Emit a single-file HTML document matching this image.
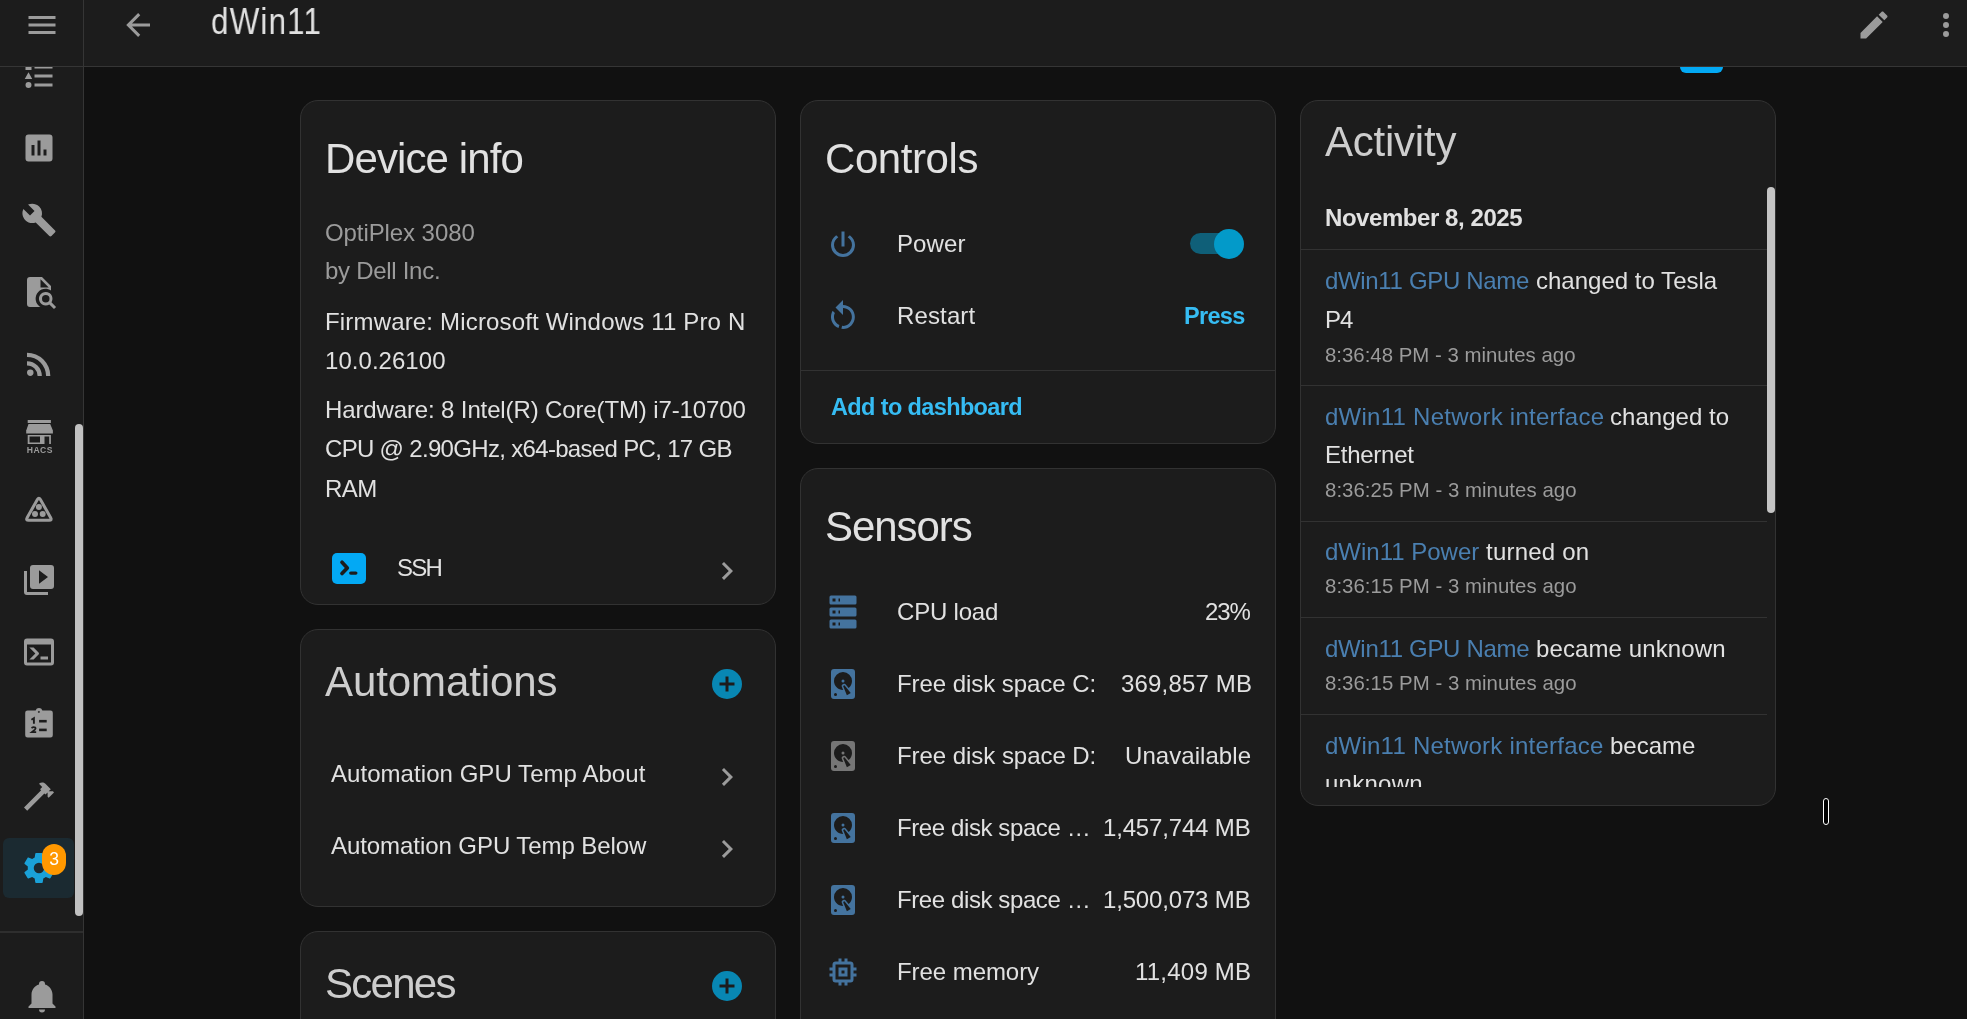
<!DOCTYPE html>
<html><head><meta charset="utf-8"><title>dWin11</title>
<style>
html,body{margin:0;padding:0;width:1967px;height:1019px;overflow:hidden;background:#111111;font-family:'Liberation Sans', sans-serif;}
.t{position:absolute;white-space:nowrap;line-height:1;will-change:transform;}
.i{position:absolute;display:block;will-change:transform;}
.card{position:absolute;background:#1c1c1c;border:1px solid #323232;border-radius:18px;box-sizing:border-box;overflow:hidden;}
.hr{position:absolute;height:1px;background:#323232;}
</style></head><body>

<div class="card" style="left:300px;top:100px;width:476px;height:505px"></div>
<div class="card" style="left:300px;top:629px;width:476px;height:278px"></div>
<div class="card" style="left:300px;top:931px;width:476px;height:200px"></div>
<div class="card" style="left:800px;top:100px;width:476px;height:344px"></div>
<div class="card" style="left:800px;top:468px;width:476px;height:700px"></div>
<div class="card" style="left:1300px;top:100px;width:476px;height:706px"></div>
<div class="t" id="devinfo" style="left:325.00px;top:138px;font-size:42px;color:#e1e1e1;letter-spacing:-0.900px;">Device info</div>
<div class="t" id="optiplex" style="left:325.00px;top:221px;font-size:24px;color:#9b9b9b;letter-spacing:-0.083px;">OptiPlex 3080</div>
<div class="t" id="bydell" style="left:325.00px;top:259px;font-size:24px;color:#9b9b9b;letter-spacing:-0.288px;">by Dell Inc.</div>
<div class="t" id="firmware" style="left:325.00px;top:310px;font-size:24px;color:#e1e1e1;letter-spacing:0.171px;">Firmware: Microsoft Windows 11 Pro N</div>
<div class="t" id="ver" style="left:325.00px;top:349px;font-size:24px;color:#e1e1e1;letter-spacing:0.042px;">10.0.26100</div>
<div class="t" id="hw1" style="left:325.00px;top:398px;font-size:24px;color:#e1e1e1;letter-spacing:-0.128px;">Hardware: 8 Intel(R) Core(TM) i7-10700</div>
<div class="t" id="hw2" style="left:325.00px;top:437px;font-size:24px;color:#e1e1e1;letter-spacing:-0.679px;">CPU @ 2.90GHz, x64-based PC, 17 GB</div>
<div class="t" id="hw3" style="left:325.00px;top:477px;font-size:24px;color:#e1e1e1;letter-spacing:-0.500px;">RAM</div>
<div style="position:absolute;left:332px;top:553px;width:34px;height:31px;border-radius:5px;background:#03a9f4"></div>
<svg class="i" style="left:332px;top:553px;width:34px;height:31px" viewBox="0 0 34 31"><path d="M10,9.3L15.3,14.9L10,20.5" fill="none" stroke="#1c1c1c" stroke-width="3.7" stroke-linecap="round" stroke-linejoin="round"/><path d="M18.8,20.1H23.8" stroke="#1c1c1c" stroke-width="3.4" stroke-linecap="round"/></svg>
<div class="t" id="ssh" style="left:397.00px;top:556px;font-size:24px;color:#e1e1e1;letter-spacing:-1.700px;">SSH</div>
<svg class="i" style="left:709px;top:553px;width:36px;height:36px;" viewBox="0 0 24 24"><path fill="#9b9b9b" d="M8.59,16.58L13.17,12L8.59,7.41L10,6L16,12L10,18L8.59,16.58Z"/></svg>
<div class="t" id="autom" style="left:325.00px;top:661px;font-size:42px;color:#cdcdcd;letter-spacing:-0.100px;">Automations</div>
<svg class="i" style="left:709px;top:666px;width:36px;height:36px;" viewBox="0 0 24 24"><path fill="#0887b3" d="M17,13H13V17H11V13H7V11H11V7H13V11H17M12,2A10,10 0 0,0 2,12A10,10 0 0,0 12,22A10,10 0 0,0 22,12A10,10 0 0,0 12,2Z"/></svg>
<div class="t" id="about" style="left:331.00px;top:762px;font-size:24px;color:#e1e1e1;letter-spacing:0.052px;">Automation GPU Temp About</div>
<svg class="i" style="left:709px;top:759px;width:36px;height:36px;" viewBox="0 0 24 24"><path fill="#9b9b9b" d="M8.59,16.58L13.17,12L8.59,7.41L10,6L16,12L10,18L8.59,16.58Z"/></svg>
<div class="t" id="below" style="left:331.00px;top:834px;font-size:24px;color:#e1e1e1;letter-spacing:-0.066px;">Automation GPU Temp Below</div>
<svg class="i" style="left:709px;top:831px;width:36px;height:36px;" viewBox="0 0 24 24"><path fill="#9b9b9b" d="M8.59,16.58L13.17,12L8.59,7.41L10,6L16,12L10,18L8.59,16.58Z"/></svg>
<div class="t" id="scenes" style="left:325.00px;top:963px;font-size:42px;color:#cdcdcd;letter-spacing:-1.720px;">Scenes</div>
<svg class="i" style="left:709px;top:968px;width:36px;height:36px;" viewBox="0 0 24 24"><path fill="#0887b3" d="M17,13H13V17H11V13H7V11H11V7H13V11H17M12,2A10,10 0 0,0 2,12A10,10 0 0,0 12,22A10,10 0 0,0 22,12A10,10 0 0,0 12,2Z"/></svg>
<div class="t" id="controls" style="left:825.00px;top:138px;font-size:42px;color:#e1e1e1;letter-spacing:-0.429px;">Controls</div>
<svg class="i" style="left:825px;top:227px;width:36px;height:36px;" viewBox="0 0 24 24"><path fill="#44739e" d="M16.56,5.44L15.11,6.89C16.84,7.94 18,9.83 18,12A6,6 0 0,1 12,18A6,6 0 0,1 6,12C6,9.83 7.16,7.94 8.88,6.88L7.44,5.44C5.36,6.88 4,9.28 4,12A8,8 0 0,0 12,20A8,8 0 0,0 20,12C20,9.28 18.64,6.88 16.56,5.44M13,3H11V13H13"/></svg>
<div class="t" id="power" style="left:897.00px;top:232px;font-size:24px;color:#e1e1e1;letter-spacing:0.100px;">Power</div>
<div style="position:absolute;left:1190px;top:233px;width:50px;height:21px;border-radius:11px;background:#0f5f78"></div>
<div style="position:absolute;left:1214px;top:229px;width:30px;height:30px;border-radius:50%;background:#039ac9"></div>
<svg class="i" style="left:825px;top:299px;width:36px;height:36px;" viewBox="0 0 24 24"><path fill="#44739e" d="M12,4C14.1,4 16.1,4.8 17.6,6.3C20.7,9.4 20.7,14.5 17.6,17.6C15.8,19.5 13.3,20.2 10.9,19.9L11.4,17.9C13.1,18.1 14.9,17.5 16.2,16.2C18.5,13.9 18.5,10.1 16.2,7.7C15.1,6.6 13.5,6 12,6V10.6L7,5.6L12,0.6V4M6.3,17.6C3.7,15 3.3,11 5.1,7.9L6.6,9.4C5.5,11.6 5.9,14.4 7.8,16.2C8.3,16.7 8.9,17.1 9.6,17.4L9,19.4C8,19 7.1,18.4 6.3,17.6Z"/></svg>
<div class="t" id="restart" style="left:897.00px;top:304px;font-size:24px;color:#e1e1e1;letter-spacing:0.132px;">Restart</div>
<div class="t" id="press" style="right:722.30px;text-align:right;top:305px;font-size:23.5px;color:#36bcf3;font-weight:700;letter-spacing:-0.700px;">Press</div>
<div class="hr" style="left:801px;top:370px;width:474px"></div>
<div class="t" id="addto" style="left:831.00px;top:396px;font-size:23.5px;color:#36bcf3;font-weight:700;letter-spacing:-0.626px;">Add to dashboard</div>
<div class="t" id="sensors" style="left:825.00px;top:506px;font-size:42px;color:#e1e1e1;letter-spacing:-1.068px;">Sensors</div>
<svg class="i" style="left:825px;top:593.7px;width:36px;height:36px;" viewBox="0 0 24 24"><path fill="#44739e" d="M4,1H20A1,1 0 0,1 21,2V6A1,1 0 0,1 20,7H4A1,1 0 0,1 3,6V2A1,1 0 0,1 4,1M4,9H20A1,1 0 0,1 21,10V14A1,1 0 0,1 20,15H4A1,1 0 0,1 3,14V10A1,1 0 0,1 4,9M4,17H20A1,1 0 0,1 21,18V22A1,1 0 0,1 20,23H4A1,1 0 0,1 3,22V18A1,1 0 0,1 4,17M9,5H10V3H9V5M9,13H10V11H9V13M9,21H10V19H9V21M5,3V5H7V3H5M5,11V13H7V11H5M5,19V21H7V19H5Z"/></svg>
<div class="t" id="sn0" style="left:897.00px;top:600px;font-size:24px;color:#e1e1e1;letter-spacing:-0.201px;">CPU load</div>
<div class="t" id="sv0" style="right:717.10px;text-align:right;top:600px;font-size:24px;color:#e1e1e1;letter-spacing:-1.100px;">23%</div>
<svg class="i" style="left:825px;top:665.7px;width:36px;height:36px;" viewBox="0 0 24 24"><path fill="#44739e" d="M6,2H18A2,2 0 0,1 20,4V20A2,2 0 0,1 18,22H6A2,2 0 0,1 4,20V4A2,2 0 0,1 6,2M12,4A6,6 0 0,0 6,10C6,13.31 8.69,16 12.1,16L11.22,13.77C10.95,13.29 11.11,12.68 11.59,12.4L12.45,11.9C12.93,11.63 13.54,11.79 13.82,12.27L15.74,14.69C17.12,13.59 18,11.9 18,10A6,6 0 0,0 12,4M12,9A1,1 0 0,1 13,10A1,1 0 0,1 12,11A1,1 0 0,1 11,10A1,1 0 0,1 12,9M7,18A1,1 0 0,0 6,19A1,1 0 0,0 7,20A1,1 0 0,0 8,19A1,1 0 0,0 7,18M12.09,13.27L14.58,19.58L17.17,18.08L12.95,12.77L12.09,13.27Z"/></svg>
<div class="t" id="sn1" style="left:897.00px;top:672px;font-size:24px;color:#e1e1e1;letter-spacing:-0.059px;">Free disk space C:</div>
<div class="t" id="sv1" style="right:715.10px;text-align:right;top:672px;font-size:24px;color:#e1e1e1;letter-spacing:0.180px;">369,857 MB</div>
<svg class="i" style="left:825px;top:737.7px;width:36px;height:36px;" viewBox="0 0 24 24"><path fill="#767676" d="M6,2H18A2,2 0 0,1 20,4V20A2,2 0 0,1 18,22H6A2,2 0 0,1 4,20V4A2,2 0 0,1 6,2M12,4A6,6 0 0,0 6,10C6,13.31 8.69,16 12.1,16L11.22,13.77C10.95,13.29 11.11,12.68 11.59,12.4L12.45,11.9C12.93,11.63 13.54,11.79 13.82,12.27L15.74,14.69C17.12,13.59 18,11.9 18,10A6,6 0 0,0 12,4M12,9A1,1 0 0,1 13,10A1,1 0 0,1 12,11A1,1 0 0,1 11,10A1,1 0 0,1 12,9M7,18A1,1 0 0,0 6,19A1,1 0 0,0 7,20A1,1 0 0,0 8,19A1,1 0 0,0 7,18M12.09,13.27L14.58,19.58L17.17,18.08L12.95,12.77L12.09,13.27Z"/></svg>
<div class="t" id="sn2" style="left:897.00px;top:744px;font-size:24px;color:#e1e1e1;letter-spacing:-0.048px;">Free disk space D:</div>
<div class="t" id="sv2" style="right:716.10px;text-align:right;top:744px;font-size:24px;color:#e1e1e1;letter-spacing:0.060px;">Unavailable</div>
<svg class="i" style="left:825px;top:809.7px;width:36px;height:36px;" viewBox="0 0 24 24"><path fill="#44739e" d="M6,2H18A2,2 0 0,1 20,4V20A2,2 0 0,1 18,22H6A2,2 0 0,1 4,20V4A2,2 0 0,1 6,2M12,4A6,6 0 0,0 6,10C6,13.31 8.69,16 12.1,16L11.22,13.77C10.95,13.29 11.11,12.68 11.59,12.4L12.45,11.9C12.93,11.63 13.54,11.79 13.82,12.27L15.74,14.69C17.12,13.59 18,11.9 18,10A6,6 0 0,0 12,4M12,9A1,1 0 0,1 13,10A1,1 0 0,1 12,11A1,1 0 0,1 11,10A1,1 0 0,1 12,9M7,18A1,1 0 0,0 6,19A1,1 0 0,0 7,20A1,1 0 0,0 8,19A1,1 0 0,0 7,18M12.09,13.27L14.58,19.58L17.17,18.08L12.95,12.77L12.09,13.27Z"/></svg>
<div class="t" id="sn3" style="left:897.00px;top:816px;font-size:24px;color:#e1e1e1;letter-spacing:-0.400px;">Free disk space …</div>
<div class="t" id="sv3" style="right:716.10px;text-align:right;top:816px;font-size:24px;color:#e1e1e1;letter-spacing:-0.163px;">1,457,744 MB</div>
<svg class="i" style="left:825px;top:881.7px;width:36px;height:36px;" viewBox="0 0 24 24"><path fill="#44739e" d="M6,2H18A2,2 0 0,1 20,4V20A2,2 0 0,1 18,22H6A2,2 0 0,1 4,20V4A2,2 0 0,1 6,2M12,4A6,6 0 0,0 6,10C6,13.31 8.69,16 12.1,16L11.22,13.77C10.95,13.29 11.11,12.68 11.59,12.4L12.45,11.9C12.93,11.63 13.54,11.79 13.82,12.27L15.74,14.69C17.12,13.59 18,11.9 18,10A6,6 0 0,0 12,4M12,9A1,1 0 0,1 13,10A1,1 0 0,1 12,11A1,1 0 0,1 11,10A1,1 0 0,1 12,9M7,18A1,1 0 0,0 6,19A1,1 0 0,0 7,20A1,1 0 0,0 8,19A1,1 0 0,0 7,18M12.09,13.27L14.58,19.58L17.17,18.08L12.95,12.77L12.09,13.27Z"/></svg>
<div class="t" id="sn4" style="left:897.00px;top:888px;font-size:24px;color:#e1e1e1;letter-spacing:-0.400px;">Free disk space …</div>
<div class="t" id="sv4" style="right:716.10px;text-align:right;top:888px;font-size:24px;color:#e1e1e1;letter-spacing:-0.163px;">1,500,073 MB</div>
<svg class="i" style="left:825px;top:953.7px;width:36px;height:36px;" viewBox="0 0 24 24"><path fill="#44739e" d="M17,17H7V7H17M21,11V9H19V7C19,5.89 18.1,5 17,5H15V3H13V5H11V3H9V5H7C5.89,5 5,5.89 5,7V9H3V11H5V13H3V15H5V17A2,2 0 0,0 7,19H9V21H11V19H13V21H15V19H17A2,2 0 0,0 19,17V15H21V13H19V11M13,13H11V11H13M15,9H9V15H15V9Z"/></svg>
<div class="t" id="sn5" style="left:897.00px;top:960px;font-size:24px;color:#e1e1e1;letter-spacing:-0.060px;">Free memory</div>
<div class="t" id="sv5" style="right:716.10px;text-align:right;top:960px;font-size:24px;color:#e1e1e1;letter-spacing:0.221px;">11,409 MB</div>
<div class="t" id="activity" style="left:1325.00px;top:121px;font-size:42px;color:#cdcdcd;letter-spacing:-0.231px;">Activity</div>
<div class="t" id="nov" style="left:1325.00px;top:206px;font-size:24px;color:#e1e1e1;font-weight:700;letter-spacing:-0.438px;">November 8, 2025</div>
<div class="hr" style="left:1301px;top:249px;width:466px"></div>
<div class="t" id="a1l" style="left:1325.00px;top:269px;font-size:24px;color:#4a7fb0;letter-spacing:-0.328px;">dWin11 GPU Name</div>
<div class="t" id="a1r" style="left:1536.20px;top:269px;font-size:24px;color:#e1e1e1;letter-spacing:0.011px;">changed to Tesla</div>
<div class="t" id="a1p" style="left:1325.00px;top:308px;font-size:24px;color:#e1e1e1;letter-spacing:-1.000px;">P4</div>
<div class="t" id="a1t" style="left:1325.00px;top:345px;font-size:20.4px;color:#9b9b9b;">8:36:48 PM - 3 minutes ago</div>
<div class="hr" style="left:1301px;top:385px;width:466px"></div>
<div class="t" id="a2l" style="left:1325.00px;top:405px;font-size:24px;color:#4a7fb0;letter-spacing:0.261px;">dWin11 Network interface</div>
<div class="t" id="a2r" style="left:1610.40px;top:405px;font-size:24px;color:#e1e1e1;letter-spacing:0.042px;">changed to</div>
<div class="t" id="a2p" style="left:1325.00px;top:443px;font-size:24px;color:#e1e1e1;letter-spacing:-0.259px;">Ethernet</div>
<div class="t" id="a2t" style="left:1325.00px;top:480px;font-size:20.4px;color:#9b9b9b;letter-spacing:0.040px;">8:36:25 PM - 3 minutes ago</div>
<div class="hr" style="left:1301px;top:521px;width:466px"></div>
<div class="t" id="a3l" style="left:1325.00px;top:540px;font-size:24px;color:#4a7fb0;">dWin11 Power</div>
<div class="t" id="a3r" style="left:1486.40px;top:540px;font-size:24px;color:#e1e1e1;letter-spacing:0.225px;">turned on</div>
<div class="t" id="a3t" style="left:1325.00px;top:576px;font-size:20.4px;color:#9b9b9b;letter-spacing:0.040px;">8:36:15 PM - 3 minutes ago</div>
<div class="hr" style="left:1301px;top:617px;width:466px"></div>
<div class="t" id="a4l" style="left:1325.00px;top:637px;font-size:24px;color:#4a7fb0;letter-spacing:-0.313px;">dWin11 GPU Name</div>
<div class="t" id="a4r" style="left:1536.10px;top:637px;font-size:24px;color:#e1e1e1;letter-spacing:0.110px;">became unknown</div>
<div class="t" id="a4t" style="left:1325.00px;top:673px;font-size:20.4px;color:#9b9b9b;letter-spacing:0.040px;">8:36:15 PM - 3 minutes ago</div>
<div class="hr" style="left:1301px;top:714px;width:466px"></div>
<div class="t" id="a5l" style="left:1325.00px;top:734px;font-size:24px;color:#4a7fb0;letter-spacing:0.233px;">dWin11 Network interface</div>
<div class="t" id="a5r" style="left:1610.20px;top:734px;font-size:24px;color:#e1e1e1;">became</div>
<div style="position:absolute;left:1301px;top:770px;width:466px;height:17px;overflow:hidden">
<div class="t" id="a5p" style="left:24.00px;top:2px;font-size:24px;color:#e1e1e1;letter-spacing:0.250px;">unknown</div>
</div>
<div style="position:absolute;left:1767px;top:187px;width:8px;height:326px;border-radius:4px;background:#c4c4c4"></div>
<div style="position:absolute;left:1680px;top:50px;width:43px;height:23px;border-radius:6px;background:#03a9f4"></div>
<div style="position:absolute;left:84px;top:0;width:1883px;height:66px;background:#1c1c1c;border-bottom:1px solid #353535"></div>
<svg class="i" style="left:120px;top:7px;width:36px;height:36px;" viewBox="0 0 24 24"><path fill="#9b9b9b" d="M20,11V13H8L13.5,18.5L12.08,19.92L4.16,12L12.08,4.08L13.5,5.5L8,11H20Z"/></svg>
<div class="t" id="title" style="left:211.00px;top:4px;font-size:36px;color:#e1e1e1;letter-spacing:1.400px;transform:scaleX(0.87);transform-origin:0 0;">dWin11</div>
<svg class="i" style="left:1856px;top:7px;width:36px;height:36px;" viewBox="0 0 24 24"><path fill="#9b9b9b" d="M20.71,7.04C21.1,6.65 21.1,6 20.71,5.63L18.37,3.29C18,2.9 17.35,2.9 16.96,3.29L15.12,5.12L18.87,8.87M3,17.25V21H6.75L17.81,9.93L14.06,6.18L3,17.25Z"/></svg>
<svg class="i" style="left:1928px;top:7px;width:36px;height:36px;" viewBox="0 0 24 24"><path fill="#9b9b9b" d="M12,16A2,2 0 0,1 14,18A2,2 0 0,1 12,20A2,2 0 0,1 10,18A2,2 0 0,1 12,16M12,10A2,2 0 0,1 14,12A2,2 0 0,1 12,14A2,2 0 0,1 10,12A2,2 0 0,1 12,10M12,4A2,2 0 0,1 14,6A2,2 0 0,1 12,8A2,2 0 0,1 10,6A2,2 0 0,1 12,4Z"/></svg>
<div style="position:absolute;left:0;top:0;width:83px;height:1019px;background:#1c1c1c;border-right:1px solid #353535"></div>
<div style="position:absolute;left:0;top:0;width:83px;height:66px;overflow:hidden">
</div>
<svg class="i" style="left:21px;top:58px;width:36px;height:36px;" viewBox="0 0 24 24"><path fill="#9b9b9b" d="M5,9.5L7.5,14H2.5L5,9.5M3,4H7V8H3V4M5,20A2,2 0 0,0 7,18A2,2 0 0,0 5,16A2,2 0 0,0 3,18A2,2 0 0,0 5,20M9,5V7H21V5H9M9,19H21V17H9V19M9,13H21V11H9V13Z"/></svg>
<div style="position:absolute;left:0;top:0;width:83px;height:66px;background:#1c1c1c;border-bottom:1px solid #353535"></div>
<svg class="i" style="left:24px;top:7px;width:36px;height:36px;" viewBox="0 0 24 24"><path fill="#9b9b9b" d="M3,6H21V8H3V6M3,11H21V13H3V11M3,16H21V18H3V16Z"/></svg>
<svg class="i" style="left:21px;top:130px;width:36px;height:36px;" viewBox="0 0 24 24"><path fill="#9b9b9b" d="M19,3H5A2,2 0 0,0 3,5V19A2,2 0 0,0 5,21H19A2,2 0 0,0 21,19V5A2,2 0 0,0 19,3M9,17H7V10H9V17M13,17H11V7H13V17M17,17H15V13H17V17Z"/></svg>
<svg class="i" style="left:21px;top:202px;width:36px;height:36px;" viewBox="0 0 24 24"><path fill="#9b9b9b" d="M22.7,19L13.6,9.9C14.5,7.6 14,4.9 12.1,3C10.1,1 7.1,0.6 4.7,1.7L9,6L6,9L1.6,4.7C0.4,7.1 0.9,10.1 2.9,12.1C4.8,14 7.5,14.5 9.8,13.6L18.9,22.7C19.3,23.1 19.9,23.1 20.3,22.7L22.6,20.4C23.1,20 23.1,19.3 22.7,19Z"/></svg>
<svg class="i" style="left:21px;top:274px;width:36px;height:36px;" viewBox="0 0 24 24"><path fill="#9b9b9b" d="M14,2H6A2,2 0 0,0 4,4V20A2,2 0 0,0 6,22H13C12.59,21.75 12.2,21.44 11.86,21.1C9.22,18.67 9.05,14.56 11.5,11.92C13.69,9.5 17.33,9.13 20,11V8L14,2M13,9V3.5L18.5,9H13M20.31,18.9C21.64,16.79 21,14 18.91,12.68C16.8,11.35 14,12 12.69,14.08C11.35,16.19 12,18.97 14.09,20.3C15.55,21.23 17.41,21.23 18.88,20.32L22,23.39L23.39,22L20.31,18.9M16.5,19A2.5,2.5 0 0,1 14,16.5A2.5,2.5 0 0,1 16.5,14A2.5,2.5 0 0,1 19,16.5A2.5,2.5 0 0,1 16.5,19Z"/></svg>
<svg class="i" style="left:21px;top:346px;width:36px;height:36px;" viewBox="0 0 24 24"><path fill="#9b9b9b" d="M6.18,15.64A2.18,2.18 0 0,1 8.36,17.82C8.36,19 7.38,20 6.18,20C5,20 4,19 4,17.82A2.18,2.18 0 0,1 6.18,15.64M4,4.44A15.56,15.56 0 0,1 19.56,20H16.73A12.73,12.73 0 0,0 4,7.27V4.44M4,10.1A9.9,9.9 0 0,1 13.9,20H11.07A7.07,7.07 0 0,0 4,12.93V10.1Z"/></svg>
<svg class="i" style="left:21px;top:418px;width:36px;height:36px" viewBox="0 0 36 36">
<rect x="6.7" y="2" width="23.2" height="3" fill="#9b9b9b"/>
<path d="M7.5,6H29.2L31.9,12.5V15.5H5.2V12.5Z" fill="#9b9b9b"/>
<path d="M6.7,17H29.9V26H6.7Z M8.5,18.6V24.4H19V18.6Z M23.5,18.6V26H28.2V18.6Z" fill="#9b9b9b" fill-rule="evenodd"/>
<text x="18.9" y="35.2" font-family="Liberation Sans" font-weight="700" font-size="8.6" text-anchor="middle" fill="#9b9b9b" letter-spacing="0.45">HACS</text>
</svg>
<svg class="i" style="left:21px;top:490px;width:36px;height:36px" viewBox="0 0 36 36">
<path d="M19.41,9.59L29.69,27.71Q31.2,30.3 28.2,30.3L7.6,30.3Q4.6,30.3 6.11,27.71L16.39,9.59Q17.9,7.0 19.41,9.59Z" fill="none" stroke="#9b9b9b" stroke-width="3"/>
<circle cx="17.9" cy="17" r="3" fill="#9b9b9b"/><circle cx="14" cy="23.9" r="3" fill="#9b9b9b"/><circle cx="21.7" cy="23.9" r="3" fill="#9b9b9b"/>
</svg>
<svg class="i" style="left:21px;top:562px;width:36px;height:36px;" viewBox="0 0 24 24"><path fill="#9b9b9b" d="M4,6H2V20A2,2 0 0,0 4,22H18V20H4V6M20,2H8A2,2 0 0,0 6,4V16A2,2 0 0,0 8,18H20A2,2 0 0,0 22,16V4A2,2 0 0,0 20,2M12,14.5V5.5L18,10L12,14.5Z"/></svg>
<svg class="i" style="left:21px;top:634px;width:36px;height:36px;" viewBox="0 0 24 24"><path fill="#9b9b9b" d="M20,19V7H4V19H20M20,3A2,2 0 0,1 22,5V19A2,2 0 0,1 20,21H4A2,2 0 0,1 2,19V5A2,2 0 0,1 4,3H20M13,17V15H18V17H13M9.58,13L5.57,9H8.4L11.7,12.3C12.09,12.69 12.09,13.33 11.7,13.72L8.42,17H5.59L9.58,13Z"/></svg>
<svg class="i" style="left:21px;top:706px;width:36px;height:36px" viewBox="0 0 36 36">
<path d="M6.5,4.4H14.6A3.6,3.6 0 0,1 21.4,4.4H29.5A2.3,2.3 0 0,1 31.8,6.7V29.3A2.3,2.3 0 0,1 29.5,31.6H6.5A2.3,2.3 0 0,1 4.2,29.3V6.7A2.3,2.3 0 0,1 6.5,4.4Z" fill="#9b9b9b"/>
<path d="M17.9,4.7L19.1,5.9L17.9,7.1L16.7,5.9Z" fill="#1c1c1c"/>
<path d="M10.4,13.7L12.9,12.2V17.8" fill="none" stroke="#1c1c1c" stroke-width="1.9"/>
<path d="M10.5,21.9Q12.6,20.5 14.3,21.6Q15,22.6 13.9,23.7L10.9,26.1H15.2" fill="none" stroke="#1c1c1c" stroke-width="1.8"/>
<rect x="18.1" y="13.9" width="7.6" height="2.6" fill="#1c1c1c"/><rect x="18.1" y="22.6" width="7.6" height="2.6" fill="#1c1c1c"/>
</svg>
<svg class="i" style="left:21px;top:778px;width:36px;height:36px;" viewBox="0 0 24 24"><path fill="#9b9b9b" d="M2,19.63L13.43,8.2L12.72,7.5L14.14,6.07L12,3.89C13.2,2.7 15.09,2.7 16.27,3.89L19.87,7.5L18.45,8.91H21.29L22,9.62L18.45,13.21L17.74,12.5V9.62L16.27,11.04L15.56,10.33L4.13,21.76L2,19.63Z"/></svg>
<div style="position:absolute;left:3px;top:838px;width:71px;height:60px;border-radius:6px;background:#1b2a31"></div>
<svg class="i" style="left:21px;top:850px;width:36px;height:36px;" viewBox="0 0 24 24"><path fill="#1aa1d8" d="M12,15.5A3.5,3.5 0 0,1 8.5,12A3.5,3.5 0 0,1 12,8.5A3.5,3.5 0 0,1 15.5,12A3.5,3.5 0 0,1 12,15.5M19.43,12.97C19.47,12.65 19.5,12.33 19.5,12C19.5,11.67 19.47,11.34 19.43,11L21.54,9.37C21.73,9.22 21.78,8.95 21.66,8.73L19.66,5.27C19.54,5.05 19.27,4.96 19.05,5.05L16.56,6.05C16.04,5.66 15.5,5.32 14.87,5.07L14.5,2.42C14.46,2.18 14.25,2 14,2H10C9.75,2 9.54,2.18 9.5,2.42L9.13,5.07C8.5,5.32 7.96,5.66 7.44,6.05L4.95,5.05C4.73,4.96 4.46,5.05 4.34,5.27L2.34,8.73C2.21,8.95 2.27,9.22 2.46,9.37L4.57,11C4.53,11.34 4.5,11.67 4.5,12C4.5,12.33 4.53,12.65 4.57,12.97L2.46,14.63C2.27,14.78 2.21,15.05 2.34,15.27L4.34,18.73C4.46,18.95 4.73,19.03 4.95,18.95L7.44,17.94C7.96,18.34 8.5,18.68 9.13,18.93L9.5,21.58C9.54,21.82 9.75,22 10,22H14C14.25,22 14.46,21.82 14.5,21.58L14.87,18.93C15.5,18.67 16.04,18.34 16.56,17.94L19.05,18.95C19.27,19.03 19.54,18.95 19.66,18.73L21.66,15.27C21.78,15.05 21.73,14.78 21.54,14.63L19.43,12.97Z"/></svg>
<div style="position:absolute;left:42px;top:844px;width:24px;height:31px;border-radius:12px;background:#ff9800"></div>
<div class="t" style="left:42px;width:24px;text-align:center;top:844px;font-size:17.5px;line-height:31px;color:#fff">3</div>
<div style="position:absolute;left:75px;top:424px;width:8px;height:492px;border-radius:4px;background:#c1c1c1"></div>
<div style="position:absolute;left:0;top:931px;width:83px;height:2px;background:#2e2e2e"></div>
<svg class="i" style="left:24px;top:978px;width:36px;height:36px;" viewBox="0 0 24 24"><path fill="#9b9b9b" d="M21,19V20H3V19L5,17V11C5,7.9 7.03,5.17 10,4.29C10,4.19 10,4.1 10,4A2,2 0 0,1 12,2A2,2 0 0,1 14,4C14,4.1 14,4.19 14,4.29C16.97,5.17 19,7.9 19,11V17L21,19M14,21A2,2 0 0,1 12,23A2,2 0 0,1 10,21"/></svg>
<div style="position:absolute;left:1823px;top:798px;width:6px;height:27px;box-sizing:border-box;border:1.5px solid #fff;border-radius:3px;background:#000"></div>
</body></html>
